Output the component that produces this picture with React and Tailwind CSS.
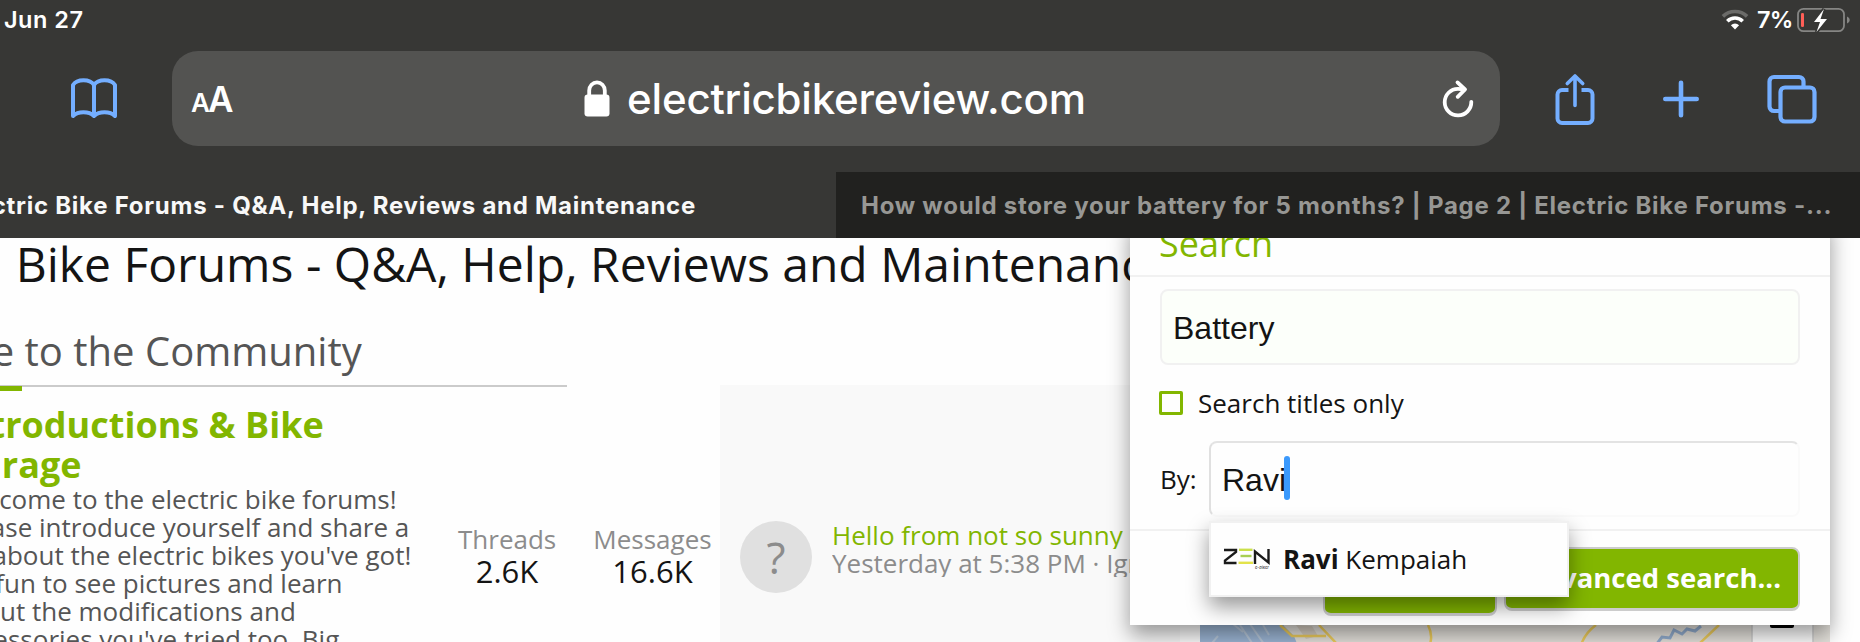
const description = [
  "Welcome to the electric bike forums!",
  "Please introduce yourself and share a",
  "bit about the electric bikes you've got!",
  "It's fun to see pictures and learn",
  "about the modifications and",
  "accessories you've tried too. Big",
];

function BookIcon() {
  return (
    <svg width="48" height="42" viewBox="0 0 48 42" fill="none" stroke="#74aeff" strokeWidth="4" strokeLinecap="round" strokeLinejoin="round">
      <path d="M24 7C20 .8 7 .8 3 7v31c5-5 16-5 21 0 5-5 16-5 21 0V7C41 .8 28 .8 24 7v31" />
    </svg>
  );
}

function LockIcon() {
  return (
    <svg width="26" height="37" viewBox="0 0 26 37">
      <path d="M5.2 17V10.5a7.8 8.2 0 0 1 15.6 0V17" fill="none" stroke="#fff" strokeWidth="3.8" />
      <rect x="0.5" y="14.5" width="25" height="22" rx="3.2" fill="#fff" />
    </svg>
  );
}

function ReloadIcon() {
  return (
    <svg width="32" height="40" viewBox="0 0 32 40" fill="none" stroke="#fff" strokeWidth="3.8" strokeLinecap="round" strokeLinejoin="round">
      <path d="M29.3 22.8A13.3 13.3 0 1 1 16 9.8c2.4 0 4.5.3 6.5.7" />
      <path d="M15.5 3.4 23 10.5l-7.3 7.3" />
    </svg>
  );
}

function ShareIcon() {
  return (
    <svg width="40" height="52" viewBox="0 0 40 52" fill="none" stroke="#74aeff" strokeWidth="4" strokeLinecap="round" strokeLinejoin="round">
      <path d="M13.5 17H7a4.5 4.5 0 0 0-4.5 4.5v24A4.5 4.5 0 0 0 7 50h26a4.5 4.5 0 0 0 4.5-4.5v-24A4.5 4.5 0 0 0 33 17h-6.5" strokeLinecap="butt" />
      <path d="M20 3v29.5M12.3 10.5 20 3l7.7 7.5" strokeWidth="3.6" />
    </svg>
  );
}

function PlusIcon() {
  return (
    <svg width="38" height="38" viewBox="0 0 38 38" fill="none" stroke="#74aeff" strokeWidth="4.6" strokeLinecap="round">
      <path d="M19 2.8v32.4M3.3 19h31.4" />
    </svg>
  );
}

function TabsIcon() {
  return (
    <svg width="50" height="50" viewBox="0 0 50 50" fill="none" stroke="#74aeff" strokeWidth="4.2">
      <path d="M36.5 13V7.5a4.5 4.5 0 0 0-4.5-4.5H7a4.5 4.5 0 0 0-4.5 4.5v25A4.5 4.5 0 0 0 7 37h6" />
      <rect x="13.5" y="13.5" width="34" height="34" rx="4.5" />
    </svg>
  );
}

function WifiIcon() {
  return (
    <svg width="28" height="21" viewBox="0 0 28 21" fill="none">
      <path d="M1.9 7.4a17.4 17.4 0 0 1 24.2 0" stroke="#6b6b69" strokeWidth="3.6" />
      <path d="M6.3 12.2a11 11 0 0 1 15.4 0" stroke="#fff" strokeWidth="3.6" />
      <path d="M14 20.5 9.9 16.2a6 6 0 0 1 8.2 0z" fill="#fff" />
    </svg>
  );
}

function BatteryIcon() {
  return (
    <svg width="54" height="26" viewBox="0 0 54 26">
      <rect x="1" y="1.8" width="46" height="22.4" rx="5.5" fill="none" stroke="#868684" strokeWidth="1.8" />
      <path d="M50 9.5c3.6 1.5 3.6 5.5 0 7z" fill="#868684" />
      <rect x="4" y="6" width="3" height="14" rx="1.3" fill="#ff5f57" />
      <path d="M27 2 17 15h6l-3.5 10L30 12h-6.5L27 2z" fill="#fff" stroke="#373735" strokeWidth="3.4" paintOrder="stroke" />
    </svg>
  );
}

function ZenLogo() {
  return (
    <svg width="48" height="22" viewBox="0 0 48 22" fill="none">
      <path d="M1 2h12v2L2 12.5V15H13.5" stroke="#1a1a1a" strokeWidth="2.4" />
      <path d="M16 1.8H29.5" stroke="#cbe04a" strokeWidth="2.4" />
      <path d="M17.5 8H28.5" stroke="#a8cf52" strokeWidth="2.4" />
      <path d="M15.5 14.8H30" stroke="#e3e34a" strokeWidth="2.4" />
      <path d="M32 16V3.5L45.5 14.5V1" stroke="#1a1a1a" strokeWidth="2.4" />
      <text x="32" y="21" className="font-['Inter'] text-[4px] font-semibold italic" fill="#555">e-biker</text>
    </svg>
  );
}

function MapPreview() {
  return (
    <svg width="630" height="32" viewBox="0 0 630 32">
      <rect width="630" height="34" fill="#e6e3dd" />
      <path d="M0 0H78l6 15 10 10 4 10H0z" fill="#9db7d6" />
      <path d="M33 13l10 8M40 14l12 18M50 13l14 20M63 14l6 10M12 32l6-7" fill="none" stroke="#b9c9db" strokeWidth="2" />
      <path d="M96 14l16 1 6 10-12 3z" fill="#d8d0c4" />
      <g fill="none" stroke="#f0cf5e" strokeWidth="2.5">
        <path d="M80 14l12 11h34M119 14l18 19M228 14q5 10 2 19M396 14q-11 8-15 20M519 14l-20 19" />
      </g>
      <path d="M456 34l6-8 8 1 4-8 8 4 5-5 8 2 6-5" fill="none" stroke="#93aed0" strokeWidth="3" />
      <rect x="552" width="61" height="36" fill="#fff" stroke="#cfcfcf" strokeWidth="1.5" />
      <rect x="570" y="4" width="24" height="13" rx="2" fill="#000" />
    </svg>
  );
}

function BrowserChrome() {
  return (
    <header className="h-[238px] bg-[#373735] font-['Inter',sans-serif] text-white">
      <div className="flex h-[51px] items-start justify-between pl-1 pr-[9px]">
        <span className="pt-[5px] text-[23.5px] font-semibold leading-[30px] tracking-[0.5px]">Jun 27</span>
        <div className="flex items-start">
          <span className="pt-[9px]"><WifiIcon /></span>
          <span className="ml-[8px] w-[40px] pt-[5px] text-[23.5px] font-semibold leading-[30px] tracking-[-0.8px]">7%</span>
          <span className="pt-[7px]"><BatteryIcon /></span>
        </div>
      </div>

      <div className="flex h-[95px] items-center">
        <div className="w-[172px] pl-[70px]"><BookIcon /></div>
        <div className="flex h-[95px] w-[1328px] items-center justify-between rounded-[26px] bg-[#535351] pl-[19px] pr-[26px]">
          <div className="flex w-[61px] items-baseline pt-1 font-semibold leading-[40px] tracking-[-2px]">
            <span className="text-[26px]">A</span>
            <span className="text-[35px]">A</span>
          </div>
          <div className="flex items-center gap-[17px] pr-[24px]">
            <LockIcon />
            <span className="text-[42px] font-medium leading-[50px] tracking-[-0.2px]">electricbikereview.com</span>
          </div>
          <ReloadIcon />
        </div>
        <div className="flex items-center pl-[55px]">
          <ShareIcon />
          <span className="ml-[67px]"><PlusIcon /></span>
          <span className="ml-[67px]"><TabsIcon /></span>
        </div>
      </div>

      <div className="mt-[26px] flex h-[66px] text-[24px] font-bold leading-[67px] tracking-[0.74px]">
        <div className="flex w-[836px] justify-end overflow-hidden whitespace-nowrap pr-[140px] text-[#f8f8f8]">
          Electric Bike Forums - Q&A, Help, Reviews and Maintenance
        </div>
        <div className="flex-1 overflow-hidden whitespace-nowrap bg-[#21211f] pl-[25px] text-[#979794]">
          How would store your battery for 5 months? | Page 2 | Electric Bike Forums -...
        </div>
      </div>
    </header>
  );
}

function Stat({ label, value, className }) {
  return (
    <div className={`text-center ${className}`}>
      <div className="text-[26px] leading-[28px] text-[#8c8c8c]">{label}</div>
      <div className="text-[31px] leading-[36px] text-[#141414]">{value}</div>
    </div>
  );
}

function ForumPage() {
  return (
    <div>
      <h1 className="ml-[-163px] h-[87px] whitespace-nowrap text-[48px] leading-[52px] text-[#141414]">
        <span className="mr-2 tracking-[-0.3px]">Electric</span> Bike Forums - Q&A, Help, Reviews and Maintenance
      </h1>
      <div className="h-[62px] w-[567px] border-b-2 border-[#cbcbcb]">
        <h2 className="ml-[-158px] whitespace-nowrap text-[40px] leading-[51px] text-[#555]">Welcome to the Community</h2>
      </div>
      <div className="-mt-px flex h-[258px]">
        <div className="w-[720px] shrink-0">
          <div className="h-[5px] w-[22px] bg-[#82b600]" />
          <div className="flex pt-[14px]">
            <div className="ml-[-46px] w-[504px] shrink-0 whitespace-nowrap">
              <h3 className="text-[36px] font-bold leading-[40px] text-[#82b600]">
                Introductions & Bike
                <br />
                Garage
              </h3>
              <div className="text-[26px] leading-[28px] text-[#555]">
                {description.map((line) => (
                  <div key={line}>{line}</div>
                ))}
              </div>
            </div>
            <Stat label="Threads" value="2.6K" className="w-[98px] pt-[120px]" />
            <Stat label="Messages" value="16.6K" className="ml-[36px] w-[121px] pt-[120px]" />
          </div>
        </div>
        <div className="-mt-px flex w-[460px] shrink-0 bg-[#f9f9f9] pl-5 pt-[136px]">
          <div className="flex size-[72px] shrink-0 items-center justify-center rounded-full bg-[#e0e0e0] text-[44px] font-medium text-[#8c8c8c]">?</div>
          <div className="ml-5 w-[340px] text-[26px] leading-[28px]">
            <div className="overflow-hidden whitespace-nowrap text-[#82b600]">Hello from not so sunny Ireland</div>
            <div className="overflow-hidden whitespace-nowrap text-[#8c8c8c]">Yesterday at 5:38 PM · Ignatius</div>
          </div>
        </div>
        <div className="ml-5 pt-[225px]"><MapPreview /></div>
      </div>
    </div>
  );
}

function SearchMenu() {
  return (
    <div className="absolute left-[1130px] top-[-20px] flex h-[407px] w-[700px] flex-col bg-[#fefefe] text-[26px] text-[#141414] shadow-[0_10px_20px_rgba(0,0,0,0.4)]">
      <div className="h-[59px] border-b-2 border-[#f1f1f1] pl-[29px] text-[36px] leading-[52px] text-[#82b600]">Search</div>
      <div className="flex-1 px-[30px] pt-[12px]">
        <div className="flex h-[76px] items-center rounded-lg border-2 border-[#f1f1f1] bg-[#fcfffa] px-[11px] pt-0.5 font-['Liberation_Sans',sans-serif] text-[32px]">
          Battery
        </div>
        <div className="mb-[20px] mt-[20px] flex h-[36px] items-center">
          <span className="ml-[-1px] size-[24px] rounded-[2px] border-3 border-[#82b600]" />
          <span className="pl-[15px] leading-[36px]">Search titles only</span>
        </div>
        <div className="flex items-center">
          <span className="w-[49px]">By:</span>
          <div className="flex h-[76px] w-[591px] items-center rounded-lg border-2 border-b-[#fafafa] border-l-[#e0e0e0] border-r-[#fafafa] border-t-[#e3e3e3] px-[11px] pt-0.5 font-['Liberation_Sans',sans-serif] text-[32px]">
            Ravi
            <span className="-ml-[2px] mb-1 h-[44px] w-[6px] rounded-full bg-[#3b99fc]" />
          </div>
        </div>
      </div>
      <div className="flex h-[96px] justify-end gap-[7px] border-t-2 border-[#f1f1f1] pr-[30px] pt-4 font-bold text-white">
        <div className="h-[69px] w-[174px] rounded-lg border-2 border-b-[3px] border-[#ccc] bg-[#82b600]" />
        <div className="flex h-[64px] w-[296px] items-center justify-end rounded-lg border-2 border-b-[3px] border-[#ccc] bg-[#82b600] pb-0.5 pr-[17px] text-[27.5px]">
          Advanced search...
        </div>
      </div>

      <div className="absolute left-[79px] top-[303px] flex h-[76px] w-[360px] items-center border-2 border-[#f1f1f1] bg-[#fefefe] px-3 shadow-[0_10px_20px_rgba(0,0,0,0.4)]">
        <ZenLogo />
        <span className="pl-[12px]">
          <b>Ravi</b> Kempaiah
        </span>
      </div>
    </div>
  );
}

export default function App() {
  return (
    <div className="h-[642px] w-[1860px] overflow-hidden bg-[#fefefe]">
      <BrowserChrome />
      <main className="relative h-[404px] overflow-hidden font-['Open_Sans',sans-serif]">
        <ForumPage />
        <SearchMenu />
      </main>
    </div>
  );
}
